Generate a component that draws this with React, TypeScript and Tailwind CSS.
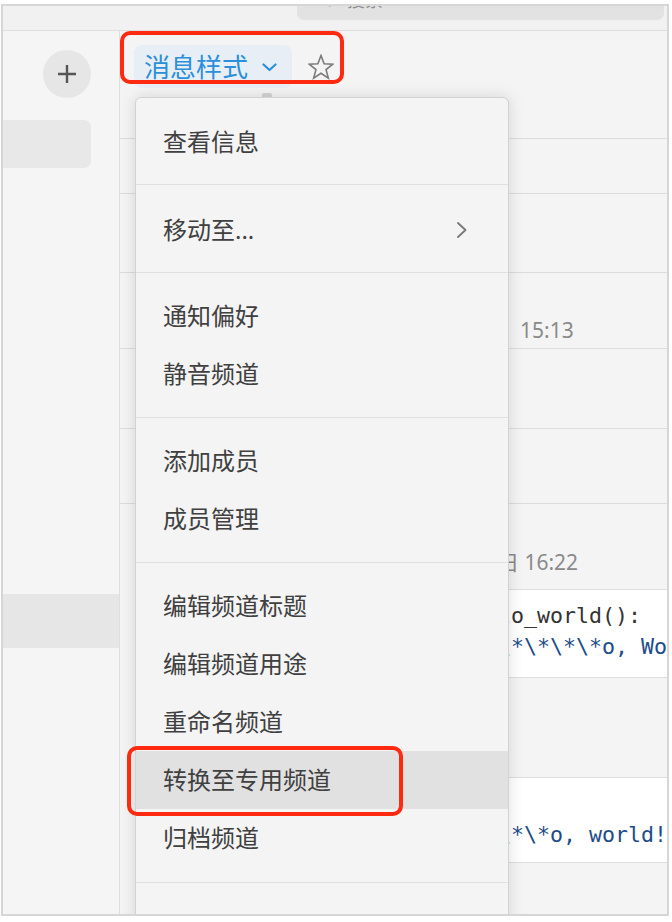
import React from 'react';

const groups: { label: string; sub?: boolean; active?: boolean }[][] = [
  [{ label: '查看信息' }],
  [{ label: '移动至...', sub: true }],
  [{ label: '通知偏好' }, { label: '静音频道' }],
  [{ label: '添加成员' }, { label: '成员管理' }],
  [
    { label: '编辑频道标题' },
    { label: '编辑频道用途' },
    { label: '重命名频道' },
    { label: '转换至专用频道', active: true },
    { label: '归档频道' },
  ],
  [{ label: '离开频道' }],
];

const groupPadding = [
  'pt-[15px] pb-[13px]',
  'pt-[16px] pb-[13px]',
  'pt-[14px] pb-[14px]',
  'pt-[14px] pb-[14px]',
  'pt-[14px] pb-[15px]',
  'pt-[14px] pb-[14px]',
];

const Star = () => (
  <svg width="26" height="26" viewBox="0 0 26 26" fill="none">
    <polygon
      points="13,1.5 16.12,9.71 24.89,10.14 18.04,15.64 20.35,24.11 13,19.3 5.65,24.11 7.96,15.64 1.11,10.14 9.89,9.71"
      stroke="#7b7b7b"
      strokeWidth="1.6"
      strokeLinejoin="miter"
    />
  </svg>
);

const ChannelMenu = () => (
  <div className="absolute left-[132px] top-[91px] bottom-[-20px] w-[374px] rounded-t-[6px] border border-[#d2d2d2] bg-[#f4f4f4] shadow-[0_0_16px_rgba(0,0,0,0.13)]">
    {groups.map((items, gi) => (
      <div key={gi} className={`${groupPadding[gi]} ${gi > 0 ? 'border-t border-[#e0e0e0]' : ''}`}>
        {items.map((item) => (
          <div
            key={item.label}
            className={`flex h-[58px] items-center justify-between pl-[27px] pr-[40px] text-[24px] leading-none text-[#404040] ${
              item.active ? 'bg-[#e1e1e1]' : ''
            }`}
          >
            <span>{item.label}</span>
            {item.sub && (
              <svg width="12" height="18" viewBox="0 0 12 18" fill="none">
                <path d="M2 2 L9.5 9 L2 16" stroke="#7a7a7a" strokeWidth="1.9" strokeLinecap="round" strokeLinejoin="round" />
              </svg>
            )}
          </div>
        ))}
      </div>
    ))}
  </div>
);

export default function App() {
  return (
    <div className="h-[922px] w-[672px] bg-white pb-[6px] pl-[1px] pr-[3px] pt-[4px]">
      <div className="relative flex h-full flex-col overflow-hidden border-2 border-[#d6d6d6] bg-[#f4f4f4] font-['Noto_Sans','Noto_Sans_CJK_SC',sans-serif]">
        {/* top bar with search */}
        <div className="h-[25px] shrink-0 border-b border-[#dedede] bg-[#f1f1f1]">
          <div className="ml-[294px] mr-[3px] h-[14px] overflow-hidden rounded-b-[7px] bg-[#e2e2e2]">
            <div className="-mt-[16px] flex items-center gap-[8px] pl-[32px] text-[18px] leading-[20px] text-[#8c8c8c]">
              <span>⌕</span>
              <span>搜索</span>
            </div>
          </div>
        </div>

        <div className="flex min-h-0 flex-1">
          {/* sidebar */}
          <div className="flex w-[117px] shrink-0 flex-col border-r border-[#dedede] bg-[#f5f5f5]">
            <div className="ml-[40px] mt-[19px] grid h-12 w-12 place-items-center rounded-full bg-[#e6e6e6]">
              <svg width="22" height="22" viewBox="0 0 22 22">
                <path d="M11 2 V20 M2 11 H20" stroke="#555" strokeWidth="2.4" />
              </svg>
            </div>
            <div className="mt-[22px] h-[48px] w-[88px] rounded-r-[7px] bg-[#e8e8e8]" />
            <div className="mt-[426px] h-[54px] w-full bg-[#e6e6e6]" />
          </div>

          {/* main */}
          <div className="flex min-w-0 flex-1 flex-col">
            <div className="flex h-[108px] shrink-0 items-start border-b border-[#dcdcdc] pl-[14px] pt-[14px]">
              <div className="flex h-[43px] w-[158px] items-center rounded-[8px] bg-[#e8eef5] pl-[10px]">
                <span className="text-[26px] leading-none text-[#2b8fdb]">消息样式</span>
                <svg className="ml-[14px] mt-[2px]" width="15" height="9" viewBox="0 0 15 9" fill="none">
                  <path d="M1.5 1.5 L7.5 7 L13.5 1.5" stroke="#2b8fdb" strokeWidth="2.2" strokeLinecap="round" strokeLinejoin="round" />
                </svg>
              </div>
              <div className="ml-[16px] mt-[9px]">
                <Star />
              </div>
            </div>
            <div className="h-[55px] shrink-0 border-b border-[#dcdcdc]" />
            <div className="h-[79px] shrink-0 border-b border-[#dcdcdc]" />
            <div className="flex h-[76px] shrink-0 items-start border-b border-[#dcdcdc] pl-[275px] pt-[43px] text-[21px] leading-[28px]">
              <span className="w-[125px] text-[#333]">管理员</span>
              <span className="text-[#8a8a8a]">15:13</span>
            </div>
            <div className="h-[80px] shrink-0 border-b border-[#dcdcdc]" />
            <div className="h-[75px] shrink-0 border-b border-[#dcdcdc]" />
            <div className="flex flex-col">
              <div className="pl-[336px] pt-[44px] text-[21px] leading-[28px] text-[#8a8a8a]">星期日 16:22</div>
              <div className="ml-[275px] mt-[13px] h-[89px] border-y border-[#dedede] bg-white pl-[12px] pt-[10px] font-['DejaVu_Sans_Mono',monospace] text-[21.6px] leading-[31px]">
                <div className="whitespace-pre text-[#333]">def hello_world():</div>
                <div className="whitespace-pre text-[#1d4c88]">print("\*\*\*\*o, World!")</div>
              </div>
              <div className="ml-[275px] mt-[99px] h-[86px] border-y border-[#dedede] bg-white pl-[12px] pt-[10px] font-['DejaVu_Sans_Mono',monospace] text-[21.6px] leading-[31px]">
                <div className="whitespace-pre text-[#333]"># demo</div>
                <div className="whitespace-pre text-[#1d4c88]">print("\*\*o, world!")</div>
              </div>
            </div>
          </div>
        </div>

        <div className="absolute left-[259px] top-[87px] h-[4px] w-[10px] rounded-t-[2px] bg-[#d4d4d4]" />
        <ChannelMenu />

        {/* annotation boxes */}
        <div className="pointer-events-none absolute left-[117px] top-[25px] h-[53px] w-[224px] rounded-[10px] border-[4px] border-[#ff2a0f]" />
        <div className="pointer-events-none absolute left-[124px] top-[740px] h-[70px] w-[276px] rounded-[10px] border-[4px] border-[#ff2a0f]" />
      </div>
    </div>
  );
}
